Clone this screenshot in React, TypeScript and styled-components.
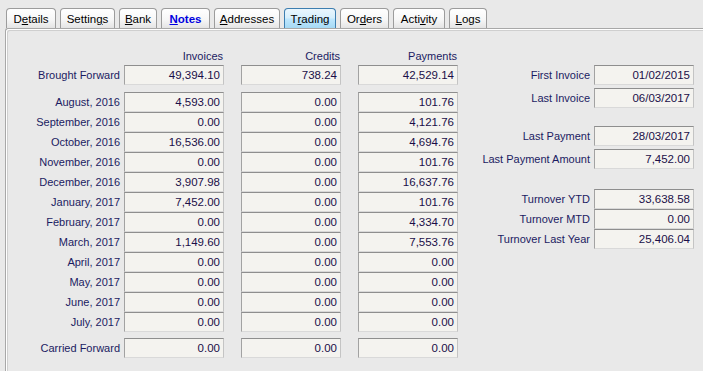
import React from 'react';
import styled, { createGlobalStyle, css } from 'styled-components';

const GlobalStyle = createGlobalStyle`
  html, body {
    margin: 0;
    padding: 0;
    background: #e9e9e9;
    font-family: 'Liberation Sans', Arial, sans-serif;
    font-size: 11px;
    overflow: hidden;
  }
`;

const Window = styled.div`
  width: 703px;
  height: 371px;
  background: #e9e9e9;
  overflow: hidden;
`;

const TabBar = styled.div`
  display: flex;
  gap: 4px;
  padding: 8px 0 0 6px;
  height: 20px;
  position: relative;
  z-index: 1;
`;

const Tab = styled.div<{ $w: number; $active?: boolean; $current?: boolean }>`
  width: ${({ $w }) => $w}px;
  height: 20px;
  box-sizing: border-box;
  display: flex;
  align-items: center;
  justify-content: center;
  border: 1px solid #9c9c9c;
  border-bottom: none;
  border-radius: 4px 4px 0 0;
  background: linear-gradient(to bottom, #ffffff 0%, #f7f7f7 55%, #e4e4e4 100%);
  font-size: 11.5px;
  color: #000;
  padding-top: 1px;

  ${({ $active }) =>
    $active &&
    css`
      border-color: #3d7eb0;
      background: linear-gradient(to bottom, #eaf6fd 0%, #d7effc 45%, #bde6fd 55%, #a6d9f4 100%);
    `}

  ${({ $current }) =>
    $current &&
    css`
      font-weight: bold;
      color: #0000e0;
    `}

  & u {
    text-decoration: underline;
  }
`;

const Pane = styled.div`
  margin: 0 0 0 5px;
  border-top: 1px solid #a8a8a8;
  border-left: 1px solid #a8a8a8;
  border-top-left-radius: 3px;
  box-shadow: inset 1px 1px 0 #ffffff, inset 2px 2px 0 #cfcfcf;
  height: 343px;
  box-sizing: border-box;
  padding: 19px 0 0 3px;
  display: flex;
`;

const LeftBlock = styled.div`
  display: flex;
  flex-direction: column;
`;

const RightBlock = styled.div`
  display: flex;
  flex-direction: column;
  margin-left: 16px;
  padding-top: 17px;
`;

const Row = styled.div<{ $gap?: number }>`
  display: flex;
  height: 20px;
  margin-top: ${({ $gap }) => $gap ?? 0}px;
`;

const HeaderRow = styled(Row)`
  height: 15px;
  margin-bottom: 2px;
`;

const Cells = styled.div`
  display: flex;
  gap: 17px;
`;

const Label = styled.div<{ $w: number }>`
  width: ${({ $w }) => $w}px;
  box-sizing: border-box;
  display: flex;
  align-items: center;
  justify-content: flex-end;
  padding-right: 4px;
  color: #1b1b62;
  white-space: nowrap;
`;

const ColHead = styled.div`
  width: 100px;
  display: flex;
  align-items: center;
  justify-content: flex-end;
  padding-right: 1px;
  box-sizing: border-box;
  color: #1b1b62;
`;

const Field = styled.div`
  box-sizing: border-box;
  width: 100px;
  height: 20px;
  display: flex;
  align-items: center;
  justify-content: flex-end;
  padding: 0 3px 0 0;
  background: #f4f3ef;
  border: 1px solid;
  border-color: #8e8e8e #c4c4c4 #d9d9d9 #a2a2a2;
  color: #1a0f48;
  font-size: 11.5px;
  white-space: nowrap;
`;

const tabs: { label: React.ReactNode; w: number; active?: boolean; current?: boolean }[] = [
  { label: <>D<u>e</u>tails</>, w: 50 },
  { label: <>Settin<u>g</u>s</>, w: 55 },
  { label: <><u>B</u>ank</>, w: 38 },
  { label: <><u>N</u>otes</>, w: 49, current: true },
  { label: <><u>A</u>ddresses</>, w: 66 },
  { label: <>T<u>r</u>ading</>, w: 52, active: true },
  { label: <>Or<u>d</u>ers</>, w: 49 },
  { label: <>Acti<u>v</u>ity</>, w: 52 },
  { label: <><u>L</u>ogs</>, w: 38 },
];

const months: [string, string, string, string][] = [
  ['August, 2016', '4,593.00', '0.00', '101.76'],
  ['September, 2016', '0.00', '0.00', '4,121.76'],
  ['October, 2016', '16,536.00', '0.00', '4,694.76'],
  ['November, 2016', '0.00', '0.00', '101.76'],
  ['December, 2016', '3,907.98', '0.00', '16,637.76'],
  ['January, 2017', '7,452.00', '0.00', '101.76'],
  ['February, 2017', '0.00', '0.00', '4,334.70'],
  ['March, 2017', '1,149.60', '0.00', '7,553.76'],
  ['April, 2017', '0.00', '0.00', '0.00'],
  ['May, 2017', '0.00', '0.00', '0.00'],
  ['June, 2017', '0.00', '0.00', '0.00'],
  ['July, 2017', '0.00', '0.00', '0.00'],
];

const summary: { label: string; value: string; gap: number }[] = [
  { label: 'First Invoice', value: '01/02/2015', gap: 0 },
  { label: 'Last Invoice', value: '06/03/2017', gap: 3 },
  { label: 'Last Payment', value: '28/03/2017', gap: 18 },
  { label: 'Last Payment Amount', value: '7,452.00', gap: 3 },
  { label: 'Turnover YTD', value: '33,638.58', gap: 20 },
  { label: 'Turnover MTD', value: '0.00', gap: 0 },
  { label: 'Turnover Last Year', value: '25,406.04', gap: 0 },
];

const LABEL_W = 115;

const App: React.FC = () => {
  return (
    <Window>
      <GlobalStyle />
      <TabBar>
        {tabs.map((t, i) => (
          <Tab key={i} $w={t.w} $active={t.active} $current={t.current}>
            {t.label}
          </Tab>
        ))}
      </TabBar>
      <Pane>
        <LeftBlock>
          <HeaderRow>
            <Label $w={LABEL_W} />
            <Cells>
              <ColHead>Invoices</ColHead>
              <ColHead>Credits</ColHead>
              <ColHead>Payments</ColHead>
            </Cells>
          </HeaderRow>
          <Row>
            <Label $w={LABEL_W}>Brought Forward</Label>
            <Cells>
              <Field>49,394.10</Field>
              <Field>738.24</Field>
              <Field>42,529.14</Field>
            </Cells>
          </Row>
          {months.map(([m, inv, cr, pay], i) => (
            <Row key={m} $gap={i === 0 ? 7 : 0}>
              <Label $w={LABEL_W}>{m}</Label>
              <Cells>
                <Field>{inv}</Field>
                <Field>{cr}</Field>
                <Field>{pay}</Field>
              </Cells>
            </Row>
          ))}
          <Row $gap={6}>
            <Label $w={LABEL_W}>Carried Forward</Label>
            <Cells>
              <Field>0.00</Field>
              <Field>0.00</Field>
              <Field>0.00</Field>
            </Cells>
          </Row>
        </LeftBlock>
        <RightBlock>
          {summary.map((s) => (
            <Row key={s.label} $gap={s.gap}>
              <Label $w={120}>{s.label}</Label>
              <Field>{s.value}</Field>
            </Row>
          ))}
        </RightBlock>
      </Pane>
    </Window>
  );
};

export default App;
